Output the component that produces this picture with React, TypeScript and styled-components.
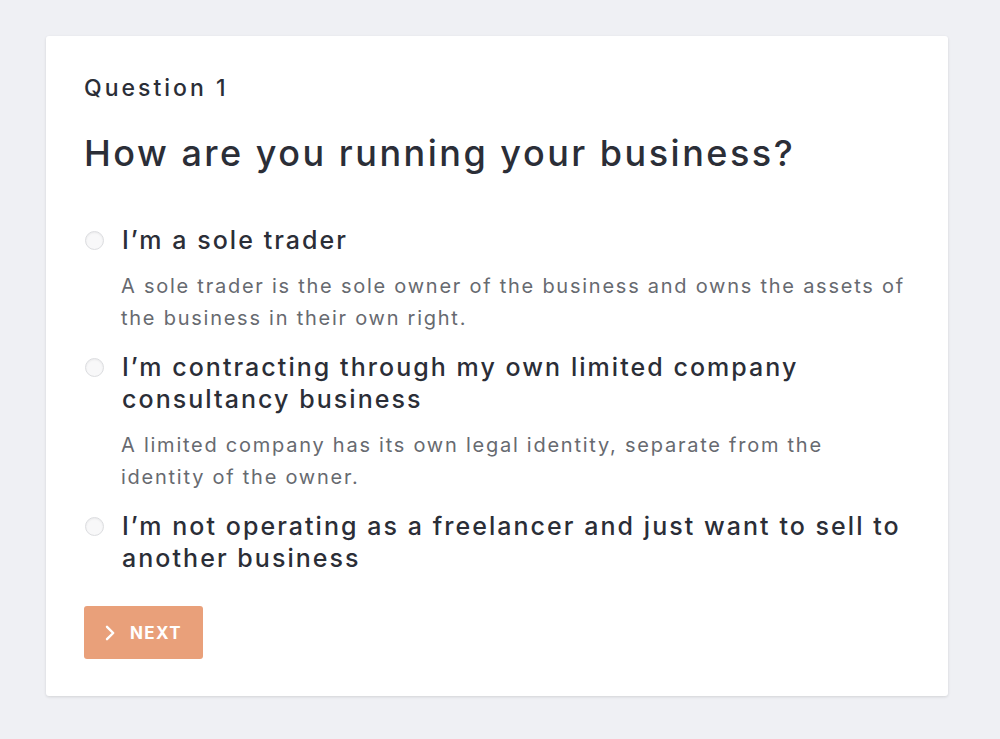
import styled, { createGlobalStyle } from "styled-components";

type Option = {
    label: string
    text?: string
}

const options: Option[] = [
    {
        label: "I’m a sole trader",
        text: "A sole trader is the sole owner of the business and owns the assets of the business in their own right.",
    },
    {
        label: "I’m contracting through my own limited company consultancy business",
        text: "A limited company has its own legal identity, separate from the identity of the owner.",
    },
    {
        label: "I’m not operating as a freelancer and just want to sell to another business",
    },
]

const GlobalStyle = createGlobalStyle`
  body {
    margin: 0;
    background: #eff0f4;
    font-family: "Inter", sans-serif;
  }
`

const OptionItem = ({label, text}: Option) => {
    return (
        <StyledOption>
            <Row>
                <Radio/>
                <Label>{label}</Label>
            </Row>
            {text && <Description>{text}</Description>}
        </StyledOption>
    );
};

export default function App() {
    return (
        <Page>
            <GlobalStyle/>
            <Card>
                <Number>Question 1</Number>
                <Heading>How are you running your business?</Heading>
                <List>
                    {options.map((o) => (
                        <OptionItem key={o.label} label={o.label} text={o.text}/>
                    ))}
                </List>
                <Button>
                    <svg width="10" height="16" viewBox="0 0 10 16" fill="none">
                        <path d="M2 1.8 L8.2 8 L2 14.2" stroke="#fff" strokeWidth="2.4" strokeLinecap="round" strokeLinejoin="round"/>
                    </svg>
                    NEXT
                </Button>
            </Card>
        </Page>
    );
}

const Page = styled.div`
  min-height: 739px;
  padding: 36px 0 0 46px;
  box-sizing: border-box;
`

const Card = styled.div`
  width: 902px;
  height: 660px;
  box-sizing: border-box;
  background: #fff;
  border-radius: 3px;
  box-shadow: 0 1px 3px rgba(0, 0, 0, 0.12);
  padding: 36px 38px 37px 38px;
  display: flex;
  flex-direction: column;
  color: #2b2e37;
`

const Number = styled.div`
  font-size: 23px;
  line-height: 32px;
  font-weight: 500;
  letter-spacing: 3px;
`

const Heading = styled.h1`
  margin: 25px 0 0;
  font-size: 36px;
  line-height: 48px;
  font-weight: 500;
  letter-spacing: 2.5px;
`

const List = styled.div`
  margin-top: 47px;
  display: flex;
  flex-direction: column;
  gap: 17px;
`

const StyledOption = styled.div`
  display: flex;
  flex-direction: column;
  gap: 14px;
`

const Row = styled.div`
  display: flex;
  align-items: flex-start;
  gap: 18px;
`

const Radio = styled.span`
  flex: none;
  width: 17px;
  height: 17px;
  margin-top: 7px;
  margin-left: 1px;
  border-radius: 50%;
  border: 1px solid #dcdde0;
  background: #f8f8f9;
  box-shadow: inset 0 1px 2px rgba(0, 0, 0, 0.06);
`

const Label = styled.div`
  font-size: 25px;
  line-height: 32px;
  font-weight: 500;
  letter-spacing: 2.05px;
`

const Description = styled.p`
  margin: 0 0 0 37px;
  font-size: 20px;
  line-height: 32px;
  color: #676a70;
  letter-spacing: 1.75px;
`

const Button = styled.button`
  margin-top: 32px;
  align-self: flex-start;
  width: 119px;
  height: 53px;
  border: none;
  border-radius: 3px;
  background: #e9a07a;
  color: #fff;
  font-family: "Inter", sans-serif;
  font-size: 17px;
  font-weight: 700;
  letter-spacing: 1.4px;
  display: flex;
  align-items: center;
  gap: 15px;
  padding: 0 0 0 21px;
`
